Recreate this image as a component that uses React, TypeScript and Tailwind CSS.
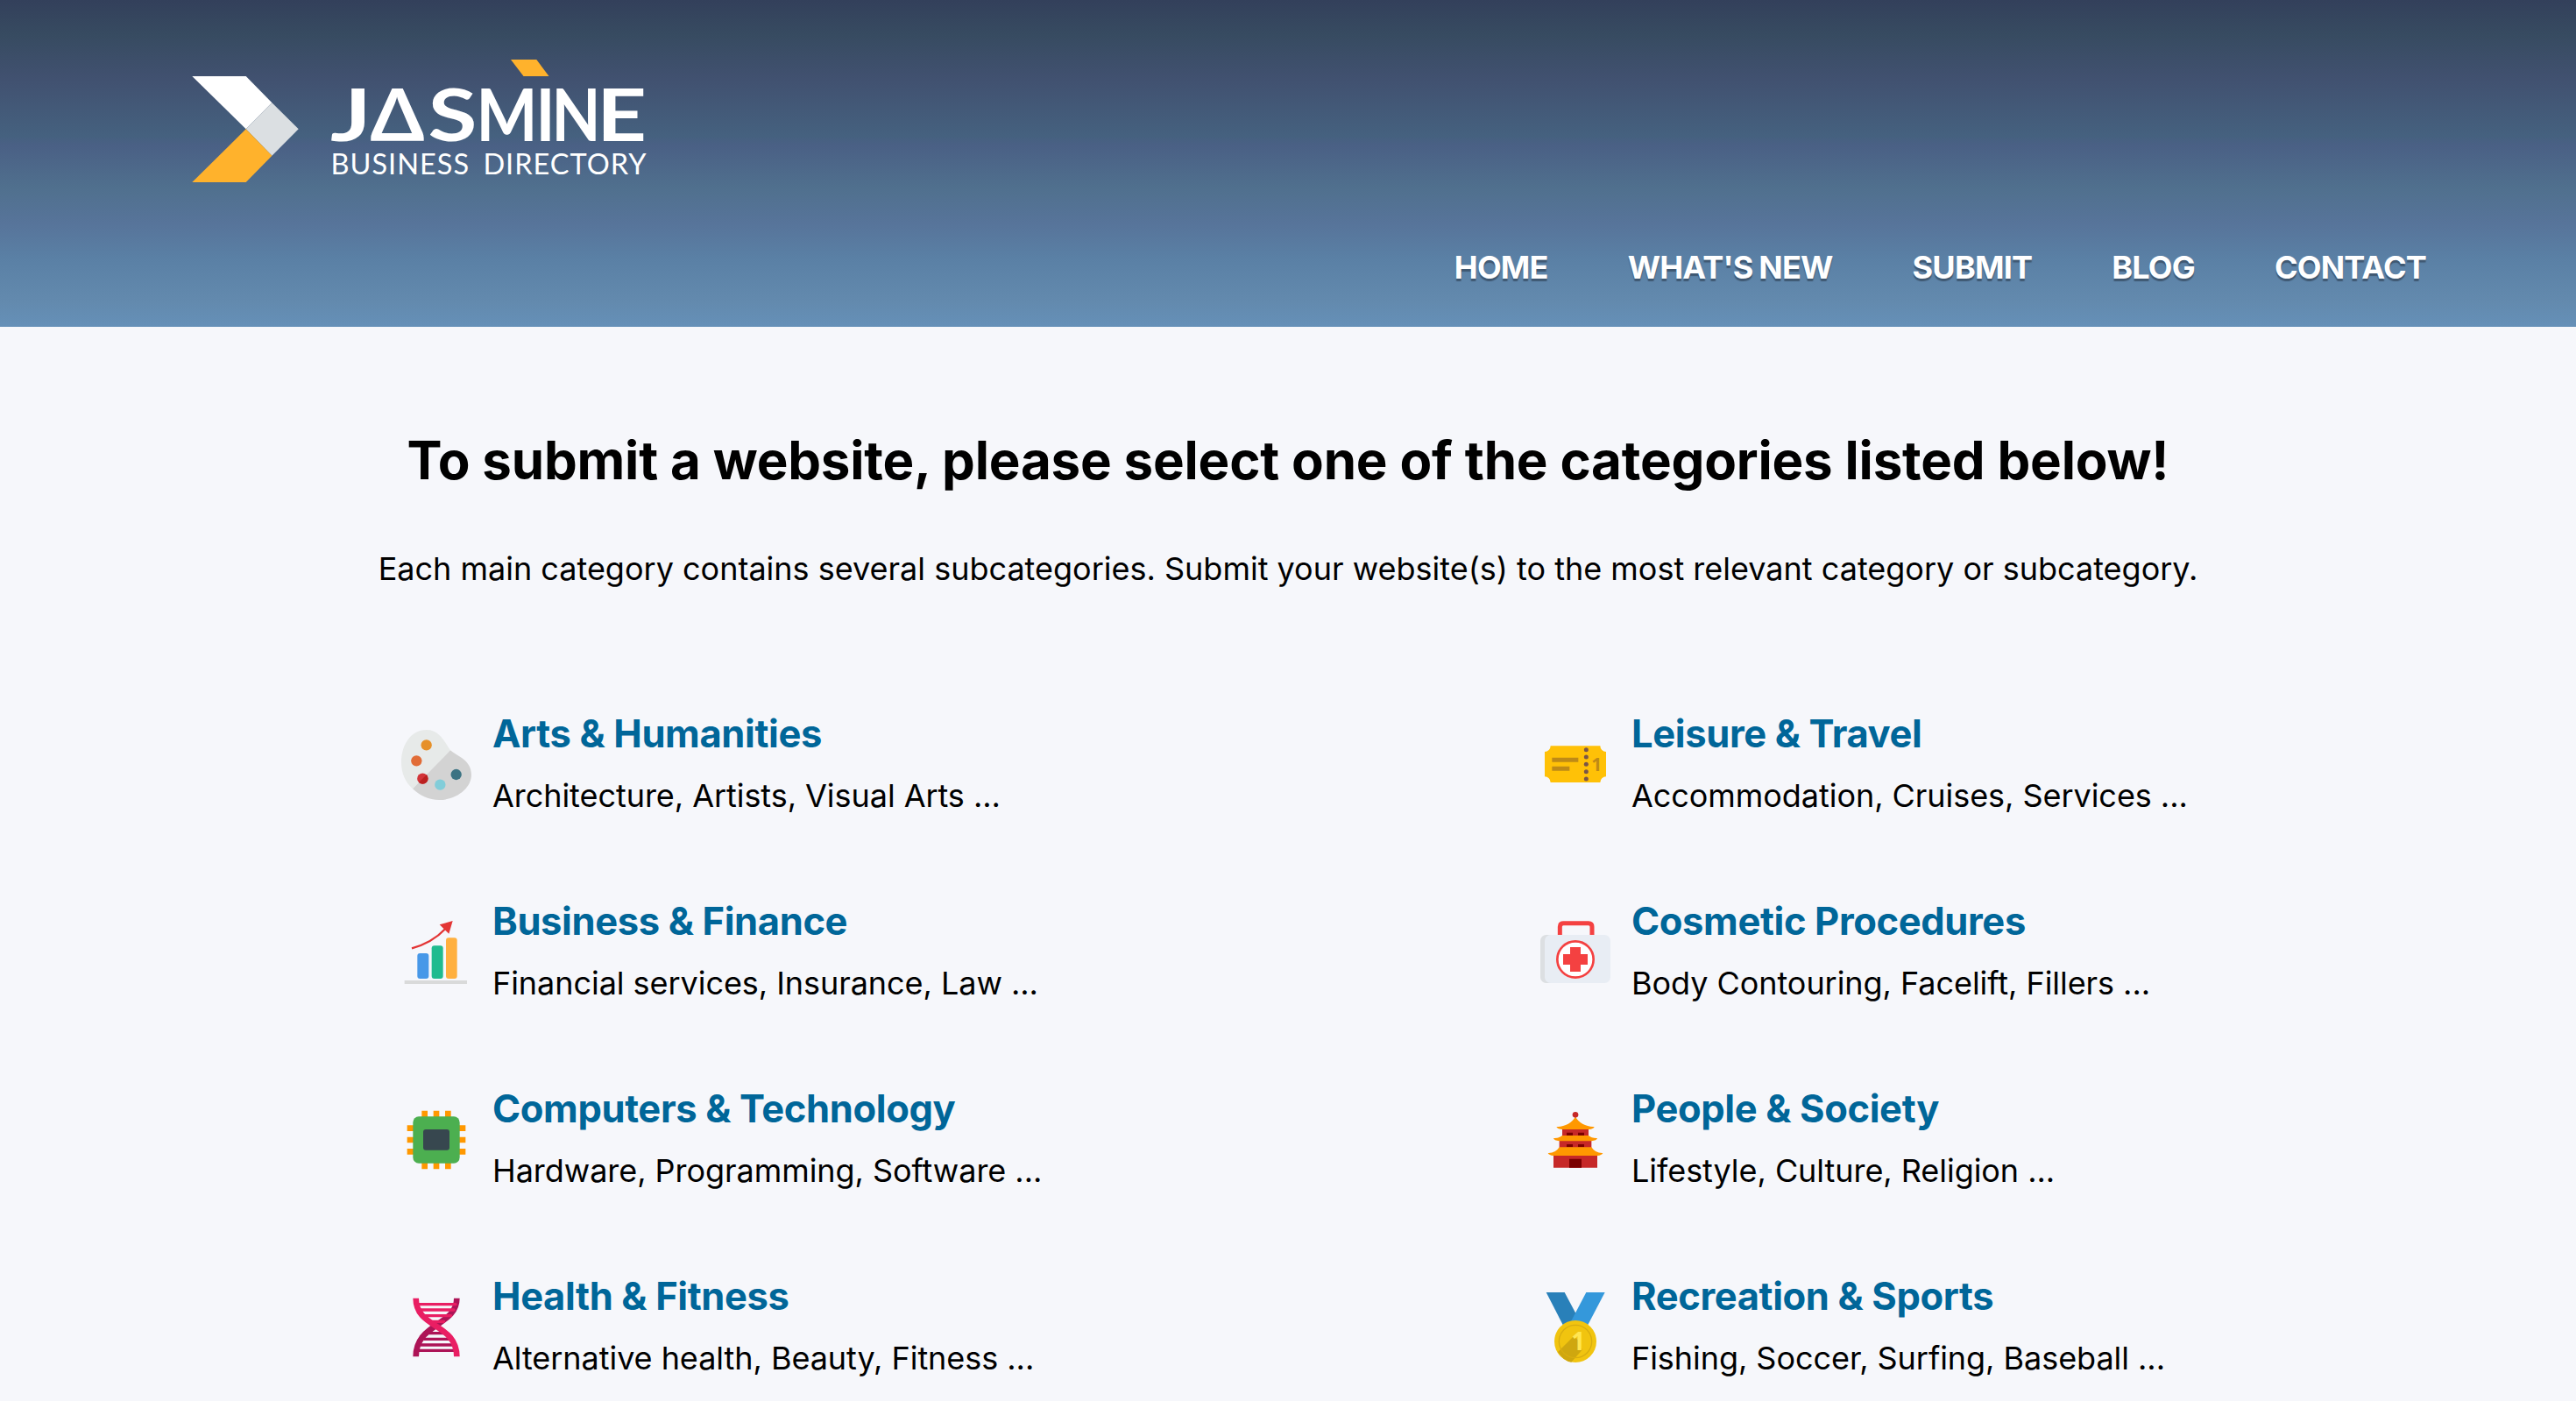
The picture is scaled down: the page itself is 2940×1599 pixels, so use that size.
import type { ReactNode } from "react";

const wordmark = [
  { letter: "J", x: 377, width: 47 },
  { letter: "Δ", x: 422.5, width: 62 },
  { letter: "S", x: 488.5, width: 56 },
  { letter: "M", x: 543.5, width: 70 },
  { letter: "I", x: 611.5, width: 22 },
  { letter: "N", x: 629.5, width: 56 },
  { letter: "E", x: 681, width: 57 },
];

function Logo() {
  return (
    <svg
      width="520"
      height="142"
      viewBox="219 67 520 142"
      role="img"
      aria-label="Jasmine Business Directory"
      className="block"
    >
      <path d="M219.3 87H280.7L310.4 117.3L280.7 147.3Z" fill="#ffffff" />
      <path d="M310.4 117.3L340.7 147.3L310.4 177.7L280.7 147.3Z" fill="#dbdfe2" />
      <path d="M280.7 147.3L310.4 177.7L280.7 208H219.3Z" fill="#ffb22c" />
      <path d="M583 68H612.3L626.5 87H597.5Z" fill="#ffb22c" />
      <text y="160.5" fill="#ffffff" className="font-['Lato'] text-[82.5px] font-bold">
        {wordmark.map((l) => (
          <tspan key={l.letter} x={l.x} textLength={l.width} lengthAdjust="spacingAndGlyphs">
            {l.letter}
          </tspan>
        ))}
      </text>
      <text
        x="377.5"
        y="199.3"
        fill="#ffffff"
        textLength="360"
        lengthAdjust="spacing"
        wordSpacing="6"
        className="font-['Lato'] text-[32.5px]"
      >
        BUSINESS DIRECTORY
      </text>
    </svg>
  );
}

function Palette() {
  return (
    <svg viewBox="54 39 240 240" className="size-20">
      <path d="M222 109C200 76 184 39 140 39C86 39 54 92 54 150C54 188 68 218 93 241Z" fill="#e7eae9" />
      <path d="M222 109C246 130 294 142 294 193C294 238 244 279 184 279C148 279 118 264 93 241Z" fill="#d3d3d3" />
      <circle cx="140" cy="91" r="18.5" fill="#e69029" />
      <circle cx="106" cy="145" r="18.5" fill="#e16c37" />
      <circle cx="127" cy="206" r="18.5" fill="#d23439" />
      <path d="M140.5 193A18.5 18.5 0 0 1 114 219Z" fill="#bb2020" />
      <circle cx="187" cy="227" r="18.5" fill="#82cdd9" />
      <circle cx="242" cy="192" r="18.5" fill="#3c7383" />
    </svg>
  );
}

function BarChart() {
  return (
    <svg viewBox="54 51 240 240" className="size-20">
      <rect x="65" y="267" width="214" height="12" fill="#d9dada" />
      <rect x="109" y="174" width="39" height="87" rx="9" fill="#4798e8" />
      <rect x="158" y="148" width="39" height="113" rx="9" fill="#20bb8f" />
      <rect x="207" y="121" width="38" height="140" rx="9" fill="#ffb03f" />
      <path d="M90 157Q160 138 205 90" fill="none" stroke="#e33535" strokeWidth="7" />
      <path d="M230 63L185 76L217 107Z" fill="#e33535" />
    </svg>
  );
}

function Chip() {
  return (
    <svg viewBox="54 48 240 240" className="size-20">
      <path
        d="M124 68h20v200h-20zM164 68h20v200h-20zM204 68h20v200h-20zM74 118h200v20h-200zM74 158h200v20h-200zM74 198h200v20h-200z"
        fill="#ff9800"
      />
      <rect x="94" y="88" width="160" height="160" rx="20" fill="#4caf50" />
      <rect x="129" y="132" width="90" height="71" rx="9" fill="#37474f" />
    </svg>
  );
}

function Dna() {
  return (
    <svg viewBox="54 45 240 240" className="size-20">
      <path d="M112 244H236M118 225H230M130 205H218M150 185H198" stroke="#ad1457" strokeWidth="10" />
      <path d="M244 65C244 160 104 150 104 265" fill="none" stroke="#ad1457" strokeWidth="20" />
      <path
        d="M112 86H240M118 105H234M132 125H224M152 145H200"
        stroke="#e91e63"
        strokeWidth="10"
        strokeLinecap="round"
      />
      <path d="M104 65C104 170 244 150 244 265" fill="none" stroke="#e91e63" strokeWidth="20" />
    </svg>
  );
}

function Ticket() {
  return (
    <svg viewBox="54 39 240 240" className="size-20">
      <path
        d="M89 94H259A20 20 0 0 0 279 114V199A20 20 0 0 0 259 219H89A20 20 0 0 0 69 199V114A20 20 0 0 0 89 94Z"
        fill="#ffc107"
      />
      <path d="M94 134H184V149H94ZM94 164H154V179H94Z" fill="#bf8a16" />
      <g fill="#795548">
        <circle cx="211" cy="107" r="7.5" />
        <circle cx="211" cy="132" r="7.5" />
        <circle cx="211" cy="157" r="7.5" />
        <circle cx="211" cy="182" r="7.5" />
        <circle cx="211" cy="207" r="7.5" />
      </g>
      <text x="229" y="179" fill="#bf8a16" className="font-['Open_Sans'] text-[63px] font-bold">
        1
      </text>
    </svg>
  );
}

function MedKit() {
  return (
    <svg viewBox="54 51 240 240" className="size-20">
      <path d="M121 114V83Q121 71 133 71H219Q231 71 231 83V114" fill="none" stroke="#f44141" strokeWidth="15" />
      <rect x="54" y="111" width="120" height="165" rx="20" fill="#dcdfe2" />
      <rect x="69" y="111" width="225" height="165" rx="20" fill="#e8edf4" />
      <circle cx="174" cy="195" r="62" fill="#ffffff" stroke="#f44141" strokeWidth="8" />
      <path d="M156 153H192V177H216V213H192V237H156V213H132V177H156Z" fill="#f44141" />
    </svg>
  );
}

function Pagoda() {
  return (
    <svg viewBox="54 48 240 240" className="size-20">
      <path d="M129 128H219V158H129ZM119 168H229V198H119ZM99 218H249V263H99Z" fill="#c62828" />
      <path
        d="M144 143H165V153H144ZM183 143H204V153H183ZM144 183H165V193H144ZM183 183H204V193H183ZM153 233H195V263H153Z"
        fill="#7a0000"
      />
      <path d="M174 88C184 110 214 125 239 123Q236 131 220 132H128Q112 131 109 123C134 125 164 110 174 88Z" fill="#ff9800" />
      <path d="M129 153H219Q230 163 249 162Q247 170 229 172H119Q101 170 99 162Q118 163 129 153Z" fill="#ff9800" />
      <path d="M119 193H229Q242 214 268 213Q264 221 249 222H99Q84 221 80 213Q106 214 119 193Z" fill="#ff9800" />
      <circle cx="174" cy="82" r="10" fill="#c62828" />
    </svg>
  );
}

function Medal() {
  return (
    <svg viewBox="54 45 240 240" className="size-20">
      <path d="M74 45H137L190 145L131 156Z" fill="#2980b9" />
      <path d="M211 45H275L217 156L158 146Z" fill="#3498db" />
      <circle cx="174" cy="213" r="72" fill="#f1c40f" />
      <path d="M169 194L114 249Q134 281 160 284L197 242L188 213Z" fill="#cfa70f" />
      <circle cx="174" cy="213" r="56" fill="none" stroke="#d8ad10" strokeWidth="4" />
      <text x="160" y="242" fill="#ffe552" className="font-['Open_Sans'] text-[84px] font-bold">
        1
      </text>
    </svg>
  );
}

type Category = { title: string; items: string; icon: ReactNode };

const categories: Category[] = [
  { title: "Arts & Humanities", items: "Architecture, Artists, Visual Arts ...", icon: <Palette /> },
  { title: "Leisure & Travel", items: "Accommodation, Cruises, Services ...", icon: <Ticket /> },
  { title: "Business & Finance", items: "Financial services, Insurance, Law ...", icon: <BarChart /> },
  { title: "Cosmetic Procedures", items: "Body Contouring, Facelift, Fillers ...", icon: <MedKit /> },
  { title: "Computers & Technology", items: "Hardware, Programming, Software ...", icon: <Chip /> },
  { title: "People & Society", items: "Lifestyle, Culture, Religion ...", icon: <Pagoda /> },
  { title: "Health & Fitness", items: "Alternative health, Beauty, Fitness ...", icon: <Dna /> },
  { title: "Recreation & Sports", items: "Fishing, Soccer, Surfing, Baseball ...", icon: <Medal /> },
];

const links = ["HOME", "WHAT'S NEW", "SUBMIT", "BLOG", "CONTACT"];

export default function App() {
  return (
    <div className="h-[1599px] w-[2940px] overflow-hidden bg-[#f6f7fb] font-['Inter',sans-serif] text-black">
      <header className="flex h-[373px] flex-col justify-between bg-[linear-gradient(to_bottom,#33405b_0px,#374b61_40px,#415170_90px,#45617f_155px,#4a6085_166px,#50708e_215px,#57749a_255px,#5a80a5_295px,#638aae_345px,#6590b8_373px)] pt-[67px] pr-[171px] pb-[46px] pl-[219px]">
        <Logo />
        <nav className="flex justify-end gap-[91px]">
          {links.map((link) => (
            <a
              key={link}
              href="#"
              className="text-[36px] leading-11 font-bold tracking-[-0.8px] whitespace-nowrap text-white [text-shadow:0_3px_1px_#3f5872] [word-spacing:-1px]"
            >
              {link}
            </a>
          ))}
        </nav>
      </header>
      <main>
        <h1 className="pt-[112px] text-center text-[60px] leading-20 font-bold tracking-[-0.19px] whitespace-nowrap">
          To submit a website, please select one of the categories listed below!
        </h1>
        <p className="pt-[57px] text-center text-[36px] leading-[54px] whitespace-nowrap">
          Each main category contains several subcategories. Submit your website(s) to the most relevant category or
          subcategory.
        </p>
        <section className="grid grid-cols-[1300px_1fr] gap-y-[84px] pt-[127px] pl-[458px]">
          {categories.map((c) => (
            <div key={c.title} className="flex h-[130px] gap-[24px]">
              <div className="pt-[30px]">{c.icon}</div>
              <div>
                <a
                  href="#"
                  className="-mt-px mb-px block text-[43.5px] leading-[70px] font-bold tracking-[-0.37px] whitespace-nowrap text-[#006699]"
                >
                  {c.title}
                </a>
                <div className="text-[36px] leading-[70px] tracking-[-0.05px] whitespace-nowrap">{c.items}</div>
              </div>
            </div>
          ))}
        </section>
      </main>
    </div>
  );
}
